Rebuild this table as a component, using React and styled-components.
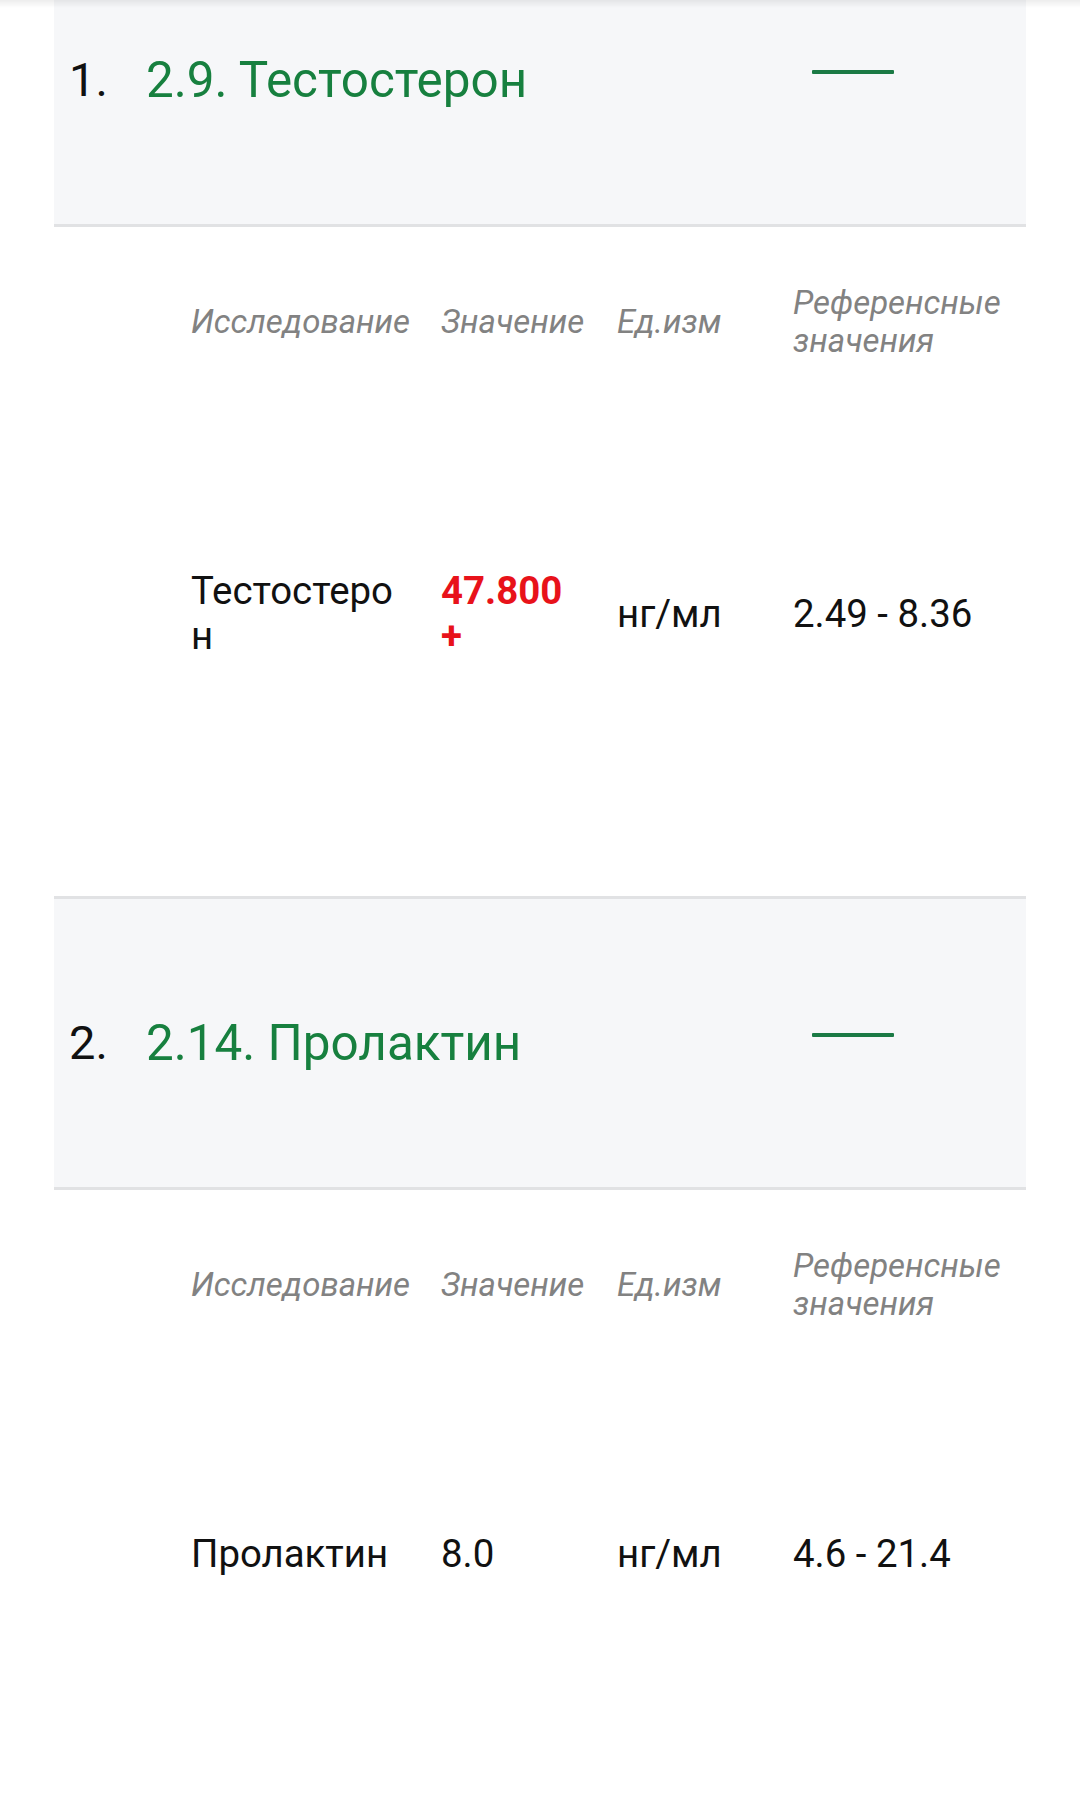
import React from "react";
import styled, { createGlobalStyle } from "styled-components";

const GlobalStyle = createGlobalStyle`
  html, body {
    margin: 0;
    padding: 0;
    background: #ffffff;
    font-family: Roboto, "Noto Sans", "Liberation Sans", sans-serif;
    overflow: hidden;
  }
`;

const TopShadow = styled.div`
  position: fixed;
  top: 0;
  left: 0;
  right: 0;
  height: 8px;
  background: linear-gradient(to bottom, rgba(0, 0, 0, 0.07), rgba(0, 0, 0, 0));
  pointer-events: none;
  z-index: 5;
`;

const Page = styled.main`
  padding: 0 54px;
`;

const List = styled.ol`
  list-style: none;
  margin: -67px 0 0;
  padding: 0;
`;

const Section = styled.li`
  padding-bottom: 88px;
`;

const Header = styled.div`
  display: flex;
  align-items: center;
  height: 294px;
  box-sizing: border-box;
  background: #f6f7f9;
  border-top: 3px solid #e1e2e4;
  border-bottom: 3px solid #e1e2e4;
  padding-left: 15px;
  padding-right: 132px;
`;

const Index = styled.span`
  width: 77px;
  flex: none;
  font-size: 47px;
  line-height: 56px;
  color: #111111;
`;

const Title = styled.span`
  font-size: 49.4px;
  line-height: 56px;
  color: #17803f;
`;

const Collapse = styled.span`
  margin-left: auto;
  margin-bottom: 16px;
  width: 82px;
  height: 4px;
  background: #1b7a45;
  border-radius: 1px;
`;

const Table = styled.div`
  display: grid;
  grid-template-columns: 250px 176px 176px 1fr;
  padding-left: 137px;
`;

const Cell = styled.div`
  display: flex;
  align-items: center;
  box-sizing: border-box;
  padding: ${(p) => (p.$head ? "57px" : "150px")} 26px
    ${(p) => (p.$head ? "58px" : "150px")} 0;
  font-size: ${(p) => (p.$head ? "33px" : "38.4px")};
  line-height: ${(p) => (p.$head ? "38px" : "45px")};
  font-style: ${(p) => (p.$head ? "italic" : "normal")};
  font-weight: ${(p) => (p.$alert ? 700 : 400)};
  color: ${(p) => (p.$head ? "#828282" : p.$alert ? "#e8121a" : "#111111")};
  overflow-wrap: anywhere;
  word-break: break-all;
  ${(p) => p.$head && "word-break: normal; overflow-wrap: normal;"}
`;

const HEAD = ["Исследование", "Значение", "Ед.изм", "Референсные значения"];

const sections = [
  {
    n: "1.",
    title: "2.9. Тестостерон",
    row: { name: "Тестостерон", value: "47.800 +", alert: true, unit: "нг/мл", ref: "2.49 - 8.36" },
  },
  {
    n: "2.",
    title: "2.14. Пролактин",
    row: { name: "Пролактин", value: "8.0", alert: false, unit: "нг/мл", ref: "4.6 - 21.4" },
  },
];

export default function App() {
  return (
    <>
      <GlobalStyle />
      <TopShadow />
      <Page>
        <List>
          {sections.map((s) => (
            <Section key={s.n}>
              <Header>
                <Index>{s.n}</Index>
                <Title>{s.title}</Title>
                <Collapse />
              </Header>
              <Table>
                {HEAD.map((h) => (
                  <Cell key={h} $head>
                    {h}
                  </Cell>
                ))}
                <Cell>{s.row.name}</Cell>
                <Cell $alert={s.row.alert}>{s.row.value}</Cell>
                <Cell>{s.row.unit}</Cell>
                <Cell>{s.row.ref}</Cell>
              </Table>
            </Section>
          ))}
        </List>
      </Page>
    </>
  );
}
